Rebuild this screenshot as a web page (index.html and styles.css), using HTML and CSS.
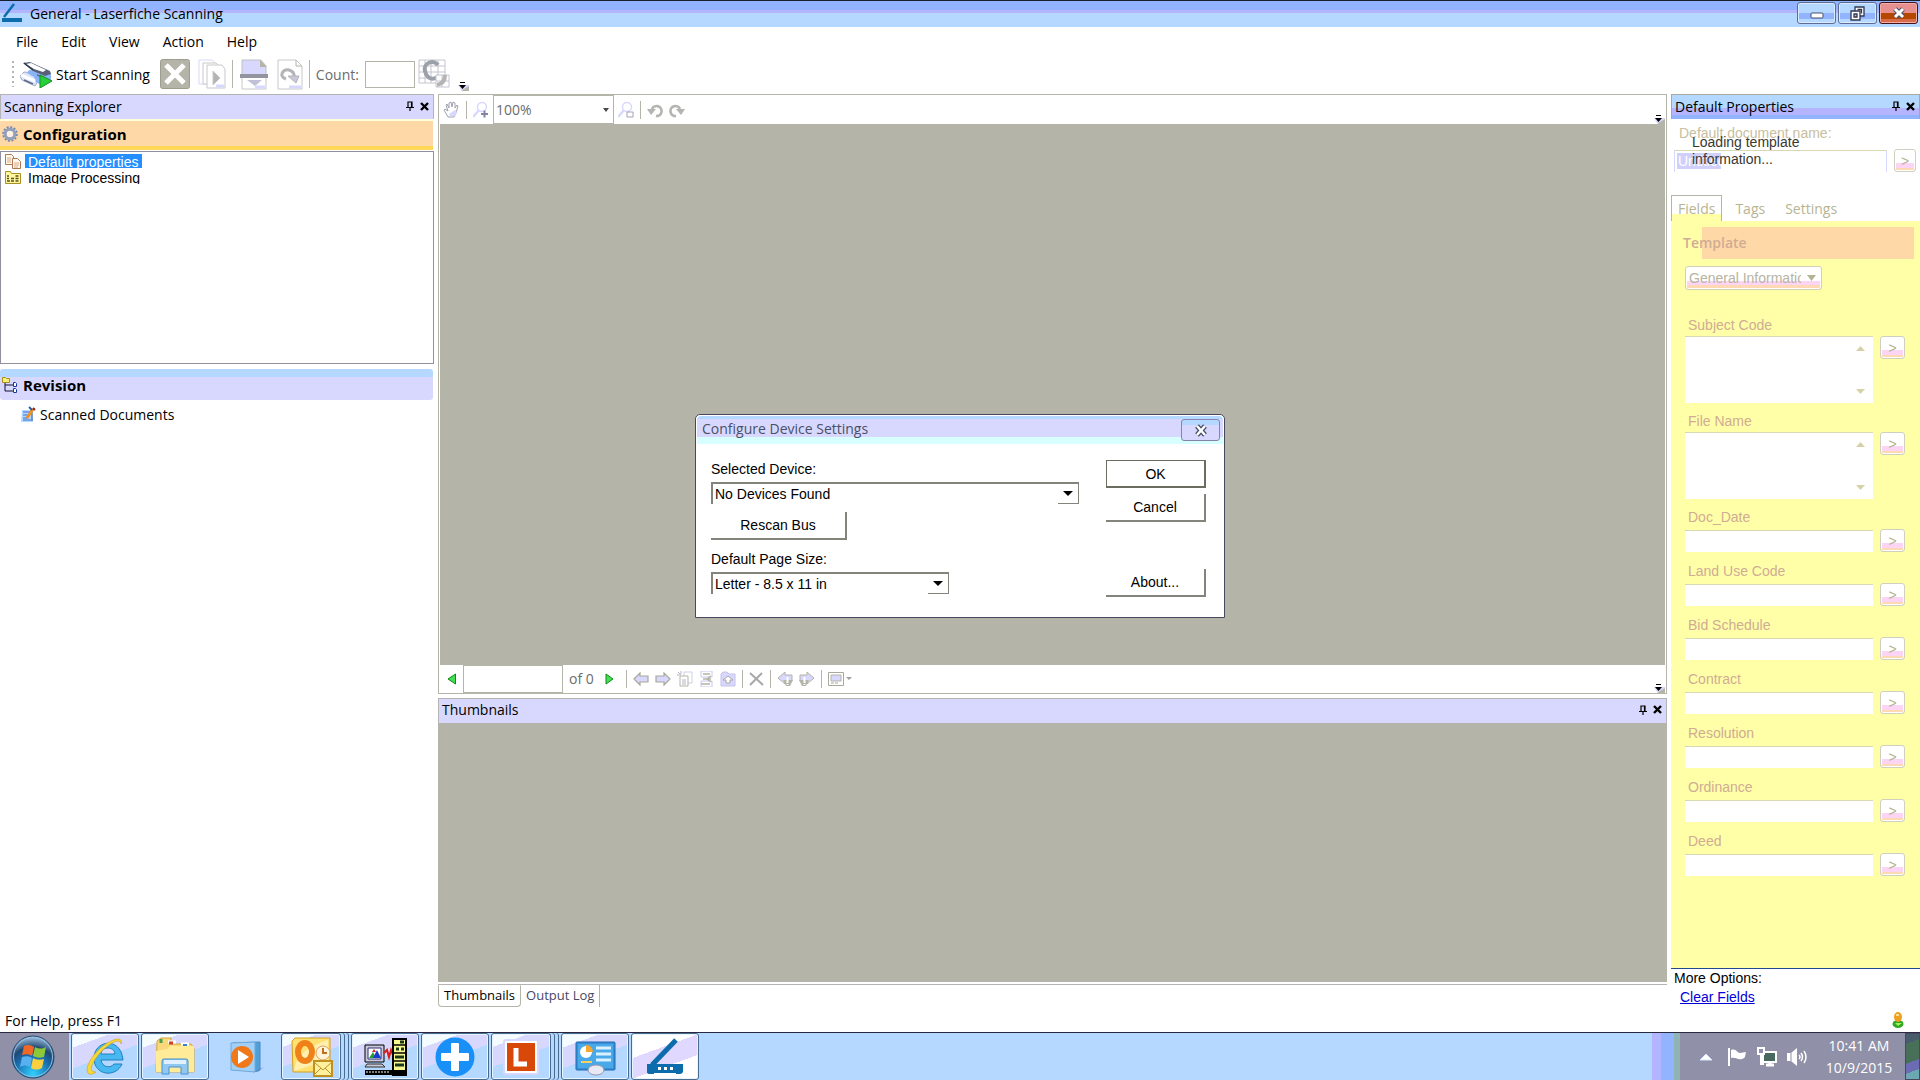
FILE: index.html
```html
<!DOCTYPE html>
<html lang="en">
<head>
  <meta charset="UTF-8">
  <meta name="viewport" content="width=device-width, initial-scale=1.0">
  <title>General - Laserfiche Scanning</title>
  <link rel="stylesheet" href="styles.css">
</head>
<body>

  <!-- Shared icons -->
  <svg class="sprite" aria-hidden="true">
    <symbol id="pin" viewBox="0 0 8 10"><path d="M2 6V1h4v5M0 6.500h8M4 7v3M5.500 1v5" fill="none" stroke="#000" stroke-width="1.200"/></symbol>
    <symbol id="cross" viewBox="0 0 9 9"><path d="M1 1l7 7M8 1L1 8" stroke="#000" stroke-width="2.400"/></symbol>
    <symbol id="more" viewBox="0 0 12 10"><path d="M0 4h11v5H3z" fill="#d8d8ff"/><path d="M3 10l8-5v5z" fill="#b4b4a8"/><path d="M2 1.500h5" stroke="#000"/><path d="M1 4h7L4.500 8z" fill="#000"/></symbol>
    <symbol id="arrow" viewBox="0 0 16 14"><path d="M1 7l6-6v3h8v6H7v3z" fill="#d8d8ff" stroke="#a8a89c" stroke-width="1.200"/></symbol>
    <symbol id="turn" viewBox="0 0 16 16"><path d="M5 7a5 5 0 1 1 4 7" fill="none" stroke="#b4b4b0" stroke-width="2.600"/><path d="M0 7h9l-5 6z" fill="#b4b4b0"/></symbol>
    <symbol id="arrow-badge" viewBox="0 0 16 16"><path d="M1 7l7-6v3h7v6H8v3z" fill="#d8d8ff" stroke="#b4b4a8"/><path d="M6 9h10l-3 6H9z" fill="#b4b4a8"/><path d="M10.500 6v6" stroke="#fff" stroke-width="2"/><path d="M10.500 13v1" stroke="#fff" stroke-width="2"/></symbol>
    <symbol id="glass" viewBox="0 0 16 16"><circle cx="9" cy="5" r="4.500" fill="#fff" stroke="#d8d8ff" stroke-width="1.400"/><path d="M6 8l-6 7" stroke="#d8d8ff" stroke-width="2.400"/></symbol>
  </svg>

  <div class="app">
    <!-- Title bar -->
    <header class="titlebar">
      <svg class="title-icon" viewBox="0 0 20 20"><path d="M12 1L2 14" stroke="#0d6cac" stroke-width="2.500"/><path d="M0 15h20v4H0z" fill="#0d6cac"/></svg>
      <h1 class="title">General - Laserfiche Scanning</h1>
      <div class="win-buttons">
        <button class="win-btn" aria-label="Minimize"><svg width="14" height="14" viewBox="0 0 14 14"><rect x="1" y="7" width="12" height="5" rx="1" fill="#fff" stroke="#46506c"/></svg></button>
        <button class="win-btn" aria-label="Restore"><svg width="15" height="15" viewBox="0 0 15 15" stroke="#303850" stroke-width="1.300"><path d="M5 1h9v9H5z" fill="#fff"/><path d="M7.500 3.500h4v4" fill="none"/><path d="M1 5h9v9H1z" fill="#fff"/><path d="M4 8h3v3H4z" fill="#b4b4ff"/></svg></button>
        <button class="win-btn win-close" aria-label="Close"><svg width="14" height="12" viewBox="0 0 14 12"><path d="M3 2l8 8M11 2l-8 8" stroke="#46506c" stroke-width="5"/><path d="M3 2l8 8M11 2l-8 8" stroke="#fff" stroke-width="3"/></svg></button>
      </div>
    </header>

    <nav class="menubar">
      <a href="#file">File</a>
      <a href="#edit">Edit</a>
      <a href="#view">View</a>
      <a href="#action">Action</a>
      <a href="#help">Help</a>
    </nav>

    <!-- Main toolbar -->
    <div class="toolbar">
      <span class="grip"></span>
      <button class="tool start">
        <svg width="32" height="28" viewBox="0 0 32 28"><path d="M0 16l4-4 11 1 3 8-3 5-13-6z" fill="#dce4f8" stroke="#9098b0" stroke-width=".8"/><path d="M9 10l14 1 8 3v6l-10 5-5-3-2-5-7-4z" fill="#88b4f8"/><path d="M3 3l7-1 20 9 1 3-6 2-12-5z" fill="#586078"/><path d="M6 4l5-1 15 7-3 2-9-3z" fill="#fff"/><path d="M4 3l9 7" stroke="#303848" stroke-width="1.500"/><path d="M1 15l14 6" stroke="#fff" stroke-width="3"/><path d="M4 20l9 4M17 15l6 2" stroke="#606c90" stroke-width="1.500"/><path d="M20 15l12 6-12 7z" fill="#28d038" stroke="#109020"/></svg>
        Start Scanning
      </button>
      <button class="tool" aria-label="Stop"><svg width="30" height="30" viewBox="0 0 30 30"><rect x=".5" y=".5" width="29" height="29" rx="2" fill="#b4b4a8" stroke="#9c9c90"/><path d="M6 6l18 18M24 6L6 24" stroke="#fff" stroke-width="5"/></svg></button>
      <button class="tool" aria-label="Scan pages"><svg width="28" height="30" viewBox="0 0 28 30" fill="#fff" stroke="#c8c8c8"><path d="M1 1h13l4 4v20H1z" stroke="#d8d8ff"/><path d="M5 4h13l4 4v17H5z"/><path d="M9 6h15l3 4v19H9z"/><path d="M15 12l7 7-7 7z" fill="#b4b4b4"/><path d="M18 27h8" stroke="#d8d8ff" stroke-width="3"/></svg></button>
      <span class="sep"></span>
      <button class="tool" aria-label="Split page"><svg width="30" height="31" viewBox="0 0 30 31"><path d="M3 1h19l5 6v9H3z" fill="#d8d8ff" stroke="#c0c0c0"/><path d="M21 1v7h7z" fill="#b4b4a8"/><path d="M3 18h24v12H3z" fill="#fff" stroke="#c8c8c8"/><path d="M1 15h28v4H1z" fill="#9494a0"/><path d="M8 21h15l-7 6z" fill="#c0c0d8"/><path d="M16 28h10" stroke="#d8d8ff" stroke-width="3"/></svg></button>
      <button class="tool" aria-label="Rescan page"><svg width="26" height="31" viewBox="0 0 26 31"><path d="M1 1h18l6 6v23H1z" fill="#fff" stroke="#c8c8c8"/><path d="M19 1v6h6" fill="none" stroke="#b4b4a8"/><path d="M9 20c-8-3-3-10 3-9 4 1 6 4 5 9" fill="none" stroke="#b4b4b8" stroke-width="3"/><path d="M11 17h11l-3 7z" fill="#c8c8dc" stroke="#b4b4b8"/><path d="M12 28h12" stroke="#d8d8ff" stroke-width="3"/></svg></button>
      <span class="sep"></span>
      <label class="count-label" for="count">Count:</label>
      <input class="count" id="count" type="text">
      <button class="tool" aria-label="Image view"><svg width="32" height="30" viewBox="0 0 32 30"><path d="M1 1h26v23H1zM1 7h26M1 13h26M1 19h26M7 1v23M13 1v23M20 1v23" fill="none" stroke="#c4c4d0"/><path d="M20 6c-5-6-15-2-13 6s8 10 14 5" fill="none" stroke="#9ca0a8" stroke-width="4"/><path d="M18 16h13v12H18zM24 16v12M18 22h13" fill="#fff" stroke="#c4c4d0"/><path d="M27 16c0 6-3 9-8 10" fill="none" stroke="#b4b4b4" stroke-width="4"/></svg></button>
      <button class="more" aria-label="Toolbar options"><svg width="12" height="10"><use href="#more"/></svg></button>
    </div>

    <main class="workspace">
      <!-- Scanning explorer -->
      <aside class="explorer">
        <div class="pane-head">
          <h2>Scanning Explorer</h2>
          <button aria-label="Pin"><svg width="8" height="10"><use href="#pin"/></svg></button>
          <button aria-label="Close pane"><svg width="9" height="9"><use href="#cross"/></svg></button>
        </div>
        <h3 class="group config">
          <svg width="16" height="16" viewBox="0 0 16 16"><circle cx="8" cy="8" r="6.800" fill="none" stroke="#7888a8" stroke-width="2" stroke-dasharray="2 1.560"/><circle cx="8" cy="8" r="4.800" fill="#fff0e0" stroke="#90a0bc" stroke-width="3"/></svg>
          Configuration
        </h3>
        <ul class="config-list">
          <li>
            <svg width="16" height="15" viewBox="0 0 16 15" fill="#fff8ec" stroke="#b07850"><path d="M.5.500h6l2 2v8h-8z"/><path d="M2 4h4M2 6h4M2 8h4" stroke="#d8a888"/><path d="M7.500 4.500h5l3 3v7h-8z"/><path d="M9 9h5M9 11h5M9 13h4" stroke="#d8a888"/></svg>
            <a href="#default" class="selected">Default properties</a>
          </li>
          <li>
            <svg width="16" height="14" viewBox="0 0 16 14"><path d="M.5 1.500h5l1 2h9v10H.5z" fill="#fff8a0" stroke="#a89020"/><path d="M2 6h2M2 8.500h2M2 11h3M6 8.500h3M6 11h3M10.500 6h3M10.500 8.500h3M10.500 11h3" stroke="#604c18" stroke-width="1.400"/></svg>
            <a href="#image">Image Processing</a>
          </li>
        </ul>
        <h3 class="group revision">
          <svg width="16" height="16" viewBox="0 0 16 16"><path d="M3 5v9h8M3 8h8" fill="none" stroke="#101030"/><path d="M.5.500h3l1 1h3v4h-7z" fill="#f8f070" stroke="#a89020"/><path d="M11.500 5.500h2l1 1v3h-3zM11.500 11.500h2l1 1v3h-3z" fill="#fff" stroke="#1838a0"/></svg>
          Revision
        </h3>
        <a class="doc-link" href="#scanned">
          <svg width="16" height="17" viewBox="0 0 16 17"><path d="M2 4h10l1 12H1z" fill="#b4d8ff"/><path d="M3 6h7M3 9h6M3 12h5M3 14h8" stroke="#3870d0"/><path d="M12 6v9" stroke="#205098"/><path d="M13 3l-6 9" stroke="#f09020" stroke-width="3"/><path d="M9 1l3 3" stroke="#2060a0" stroke-width="2"/><path d="M13 2l2 2" stroke="#902010" stroke-width="2"/></svg>
          Scanned Documents
        </a>
      </aside>

      <!-- Page view and thumbnails -->
      <section class="center">
        <div class="viewer">
          <div class="viewbar">
            <button class="tool" aria-label="Pan"><svg width="17" height="17" viewBox="0 0 17 17"><path d="M5 16L1 9l1-1 3 2-2-6 1-1 2 4V2l2-1 1 5 1-5 2 1v5l2-3 1 1-2 7-2 4z" fill="#fff" stroke="#a0a0b0"/><path d="M6 13l6-4 2 2-2 4H7z" fill="#d8d8ff"/></svg></button>
            <span class="sep"></span>
            <button class="tool" aria-label="Zoom in"><svg width="16" height="16"><use href="#glass"/><path d="M8 12h7M11.500 8.500v7" stroke="#8484a4" stroke-width="2"/></svg></button>
            <select class="zoom" aria-label="Zoom level"><option>100%</option></select>
            <button class="tool" aria-label="Zoom out"><svg width="16" height="16"><use href="#glass"/><path d="M9 10h6v5H9z" fill="#fff" stroke="#a4a4bc"/></svg></button>
            <span class="sep"></span>
            <button class="tool" aria-label="Rotate left"><svg width="16" height="16"><use href="#turn"/></svg></button>
            <button class="tool flip" aria-label="Rotate right"><svg width="16" height="16"><use href="#turn"/></svg></button>
            <button class="more" aria-label="View options"><svg width="12" height="10"><use href="#more"/></svg></button>
          </div>
          <div class="canvas"></div>
          <div class="viewbar navbar">
            <button class="tool" aria-label="Previous page"><svg width="10" height="12" viewBox="0 0 10 12"><path d="M8.500 1v10L1 6z" fill="#40e050" stroke="#108818"/></svg></button>
            <input class="page-no" type="text" aria-label="Page number">
            <span>of 0</span>
            <button class="tool next" aria-label="Next page"><svg width="10" height="12" viewBox="0 0 10 12"><path d="M1 1v10l7-5z" fill="#40e050" stroke="#108818"/></svg></button>
            <span class="sep"></span>
            <button class="tool" aria-label="Move back"><svg width="16" height="14"><use href="#arrow"/></svg></button>
            <button class="tool flip" aria-label="Move forward"><svg width="16" height="14"><use href="#arrow"/></svg></button>
            <button class="tool" aria-label="New document"><svg width="16" height="16" viewBox="0 0 16 16" fill="#fff" stroke="#d0d0e8"><path d="M7 1h8v11H7z"/><path d="M3 5h8v10H3z" stroke="#b4b4a8"/><path d="M5 9h4M5 11h4M5 13h4M1 1l3 3M4 0v3M0 4h3" stroke="#b4b4c8"/></svg></button>
            <button class="tool" aria-label="Merge pages"><svg width="15" height="16" viewBox="0 0 15 16"><path d="M2 0h11v6H2zM2 10h11v6H2z" fill="#fff" stroke="#c8c8f0"/><path d="M4 3h7M4 8h8M2 13h9M12 5l-4 3 4 3" fill="none" stroke="#b4b4a8" stroke-width="1.500"/></svg></button>
            <button class="tool" aria-label="Store"><svg width="16" height="16" viewBox="0 0 16 16"><path d="M1 3l2-2h4l2 2h6v12H1z" fill="#d8d8ff" stroke="#c4c4e8"/><path d="M3 9l5-4 5 4h-3v3H6V9z" fill="#fff" stroke="#a8a8a4"/></svg></button>
            <span class="sep"></span>
            <button class="tool" aria-label="Delete"><svg width="15" height="14" viewBox="0 0 15 14"><path d="M1 1l13 12M13 1L1 13" stroke="#a8a8a8" stroke-width="2"/></svg></button>
            <span class="sep"></span>
            <button class="tool" aria-label="Previous flag"><svg width="16" height="16"><use href="#arrow-badge"/></svg></button>
            <button class="tool flip" aria-label="Next flag"><svg width="16" height="16"><use href="#arrow-badge"/></svg></button>
            <span class="sep"></span>
            <button class="tool" aria-label="Layout"><svg width="24" height="14" viewBox="0 0 24 14"><path d="M.5.500h15v13H.5z" fill="#fff" stroke="#a8a89c"/><path d="M3 3h10v6H3z" fill="#d8d8ff" stroke="#b4b4a8"/><path d="M3 11h3M7 11h3" stroke="#a8a89c"/><path d="M18 5h6l-3 3z" fill="#a0a0a0"/></svg></button>
            <button class="more" aria-label="Navigation options"><svg width="12" height="10"><use href="#more"/></svg></button>
          </div>
        </div>

        <div class="thumbs">
          <div class="pane-head">
            <h2>Thumbnails</h2>
            <button aria-label="Pin"><svg width="8" height="10"><use href="#pin"/></svg></button>
            <button aria-label="Close pane"><svg width="9" height="9"><use href="#cross"/></svg></button>
          </div>
          <div class="canvas"></div>
        </div>
        <div class="bottom-tabs">
          <button class="active">Thumbnails</button>
          <button>Output Log</button>
        </div>
      </section>

      <!-- Default properties -->
      <aside class="props">
        <div class="pane-head active">
          <h2>Default Properties</h2>
          <button aria-label="Pin"><svg width="8" height="10"><use href="#pin"/></svg></button>
          <button aria-label="Close pane"><svg width="9" height="9"><use href="#cross"/></svg></button>
        </div>
        <div class="doc-name">
          <label for="docname">Default document name:</label>
          <div class="field-row">
            <input id="docname" type="text" value="Untitled">
            <button class="token">&gt;</button>
          </div>
          <p class="loading">Loading template information...</p>
        </div>
        <div class="prop-tabs">
          <button class="active">Fields</button>
          <button>Tags</button>
          <button>Settings</button>
        </div>
        <form class="fields">
          <label class="template" for="template">Template</label>
          <select class="template-select" id="template"><option>General Information</option></select>
          <div class="field-list">
            <label for="f1">Subject Code</label>
            <div class="field-row tall"><textarea id="f1"></textarea><button type="button" class="token">&gt;</button></div>
            <label for="f2">File Name</label>
            <div class="field-row tall"><textarea id="f2"></textarea><button type="button" class="token">&gt;</button></div>
            <label for="f3">Doc_Date</label>
            <div class="field-row"><input id="f3" type="text"><button type="button" class="token">&gt;</button></div>
            <label for="f4">Land Use Code</label>
            <div class="field-row"><input id="f4" type="text"><button type="button" class="token">&gt;</button></div>
            <label for="f5">Bid Schedule</label>
            <div class="field-row"><input id="f5" type="text"><button type="button" class="token">&gt;</button></div>
            <label for="f6">Contract</label>
            <div class="field-row"><input id="f6" type="text"><button type="button" class="token">&gt;</button></div>
            <label for="f7">Resolution</label>
            <div class="field-row"><input id="f7" type="text"><button type="button" class="token">&gt;</button></div>
            <label for="f8">Ordinance</label>
            <div class="field-row"><input id="f8" type="text"><button type="button" class="token">&gt;</button></div>
            <label for="f9">Deed</label>
            <div class="field-row"><input id="f9" type="text"><button type="button" class="token">&gt;</button></div>
          </div>
        </form>
        <div class="options">
          <p>More Options:</p>
          <a href="#clear">Clear Fields</a>
        </div>
      </aside>
    </main>

    <footer class="statusbar">
      <span>For Help, press F1</span>
      <svg width="12" height="16" viewBox="0 0 12 16"><ellipse cx="6" cy="12" rx="5.500" ry="4" fill="#30a820"/><path d="M3 11l3 3 4-3" fill="#a0f060"/><ellipse cx="6" cy="5" rx="4" ry="5" fill="#f0a020"/><path d="M4 3h3" stroke="#ffe090" stroke-width="2"/></svg>
    </footer>

    <!-- Device dialog -->
    <div class="dialog" role="dialog" aria-labelledby="dlg-title">
      <div class="dialog-head">
        <h2 id="dlg-title">Configure Device Settings</h2>
        <button class="dialog-close" aria-label="Close"><svg width="14" height="13" viewBox="0 0 14 13"><path d="M3 2l8 9M11 2l-8 9" stroke="#485068" stroke-width="5"/><path d="M3 2l8 9M11 2l-8 9" stroke="#fff" stroke-width="2.500"/></svg></button>
      </div>
      <div class="dialog-body">
        <div class="dialog-form">
          <label for="device">Selected Device:</label>
          <select id="device"><option>No Devices Found</option></select>
          <button class="dlg-btn rescan">Rescan Bus</button>
          <label for="size">Default Page Size:</label>
          <select id="size" class="size"><option>Letter - 8.5 x 11 in</option></select>
        </div>
        <div class="dialog-actions">
          <button class="dlg-btn ok">OK</button>
          <button class="dlg-btn">Cancel</button>
          <button class="dlg-btn about">About...</button>
        </div>
      </div>
    </div>
  </div>

  <!-- Taskbar -->
  <nav class="taskbar">
    <button class="start-orb" aria-label="Start">
      <svg width="44" height="44" viewBox="0 0 44 44"><defs><radialGradient id="orb" cx=".5" cy=".9" r=".9"><stop offset="0" stop-color="#30d0ff"/><stop offset=".5" stop-color="#1868a8"/><stop offset=".7" stop-color="#204870"/><stop offset="1" stop-color="#a8c8e8"/></radialGradient></defs><circle cx="22" cy="22" r="21" fill="url(#orb)" stroke="#284870"/><circle cx="22" cy="22" r="19.500" fill="none" stroke="#90c0e0"/><path d="M13 11c4-2 7-1 10 1l-2 9c-3-2-6-2-10-1z" fill="#f06828"/><path d="M24 12c4 2 7 2 11 0l-2 10c-4 1-7 1-11-1z" fill="#8cc838"/><path d="M11 22c4-1 7-1 10 1l-2 9c-3-2-6-2-10 0z" fill="#58b0f0"/><path d="M22 23c3 2 7 2 11 1l-2 9c-4 2-7 2-11 0z" fill="#f8d040"/></svg>
    </button>
    <button class="task" aria-label="Internet Explorer">
      <svg width="44" height="40" viewBox="0 0 44 40"><path d="M40 23H18c1 7 9 9 13 4h8c-6 14-28 12-28-6S38-1 40 23zM18 17h14c-1-8-13-8-14 0z" fill="#48b8f0" stroke="#2080c0"/><path d="M38 7c2-4-2-7-10-3C15 10 5 24 4 32c0 7 5 6 9 3-5 0-6-3-3-9C15 16 26 6 34 4c3 0 4 1 4 3z" fill="#f8d838" stroke="#c8a020" stroke-width=".6"/></svg>
    </button>
    <button class="task" aria-label="Windows Explorer">
      <svg width="44" height="40" viewBox="0 0 44 40"><path d="M4 4l4-3h10v6h20l3 4v24H3z" fill="#f8d878" stroke="#d0a840"/><path d="M8 2v4" stroke="#48a050" stroke-width="3"/><path d="M15 5h8M28 7h8" stroke="#fff" stroke-width="3"/><path d="M16 6h4" stroke="#d04030" stroke-width="3"/><path d="M30 8h4" stroke="#3880d0" stroke-width="2"/><path d="M3 14l11-2 3-3h24v26H3z" fill="#ffeb98"/><path d="M9 24q0-2 2-2h22q2 0 2 2v13h-7v-7H16v7H9z" fill="#90c8f0" stroke="#4890d0"/><path d="M11 25h22" stroke="#dff0ff" stroke-width="4"/></svg>
    </button>
    <button class="task idle" aria-label="Media Player">
      <svg width="44" height="40" viewBox="0 0 44 40"><path d="M28 35l13-5-6 5z" fill="#a8a8e0"/><path d="M10 6l27-1v28l-6 2z" fill="#50a0d8" stroke="#4888c0"/><path d="M8 6l24-1v30L8 33z" fill="#a0d0f8" stroke="#70a8d8"/><circle cx="19" cy="20" r="11" fill="#f07818"/><path d="M15 13l11 7-11 7z" fill="#fff"/></svg>
    </button>
    <button class="task stacked" aria-label="Outlook">
      <svg width="44" height="40" viewBox="0 0 44 40"><path d="M3 4l3-3h35v34H4z" fill="#ffe070" stroke="#d0a020"/><path d="M5 34c2-15 12-24 34-31v20z" fill="#fff0b0"/><ellipse cx="16" cy="15" rx="7" ry="9" fill="none" stroke="#f08018" stroke-width="6"/><circle cx="34" cy="16" r="7" fill="#fff4d8" stroke="#e0a060"/><path d="M34 11v5h4" fill="none" stroke="#c07020" stroke-width="2"/><path d="M25 24h18v15H25z" fill="#fff0a0" stroke="#c09020" stroke-width="2"/><path d="M25 25l9 8 9-8M25 38l7-7M43 38l-7-7" fill="none" stroke="#c09020"/></svg>
    </button>
    <button class="task" aria-label="Terminal session">
      <svg width="44" height="40" viewBox="0 0 44 40"><path d="M2 8h19v17H2z" fill="#c8c8d8" stroke="#000"/><path d="M5 11h13v11H5z" fill="#fff" stroke="#303078"/><path d="M6 21l4-6 3 6z" fill="#20a030"/><path d="M10 21l4-8 4 8z" fill="#1838d0"/><path d="M9 15l2-3 2 3z" fill="#e02020"/><path d="M4 27h15l3 3H2z" fill="#c8c8d8" stroke="#303030"/><path d="M21 16l3-3 2 7 2-7 2 5" fill="none" stroke="#e01818" stroke-width="2"/><path d="M30 2h13v36H30z" fill="#f8f890" stroke="#000" stroke-width="2"/><path d="M30 8h13M30 16h13M30 24h13" stroke="#000" stroke-width="1.500"/><path d="M37 5h4M33 12h3M38 12h3M32 20h9M32 28h9" stroke="#183818" stroke-width="3"/><path d="M2 33h41v5H2z" fill="#000"/><path d="M3 35h23" stroke="#fff" stroke-dasharray="2 1"/></svg>
    </button>
    <button class="task" aria-label="Medical app">
      <svg width="44" height="40" viewBox="0 0 44 40"><circle cx="22" cy="20" r="19.500" fill="#1890f8"/><path d="M19 7h6v10h10v6H25v10h-6V23H9v-6h10z" fill="#fff" stroke="#fff" stroke-width="2" stroke-linejoin="round"/></svg>
    </button>
    <button class="task stacked" aria-label="Laserfiche">
      <svg width="36" height="36" viewBox="0 0 36 36"><rect x="1" y="1" width="34" height="34" rx="2" fill="#fff" stroke="#d8d8ff" stroke-width="2"/><path d="M4 4h28v28H4z" fill="#d84808"/><path d="M13 9v16h11" fill="none" stroke="#fff" stroke-width="5"/></svg>
    </button>
    <button class="task" aria-label="Control Panel">
      <svg width="44" height="40" viewBox="0 0 44 40"><rect x="3" y="5" width="39" height="28" rx="1" fill="#3890d8" stroke="#2068b0"/><path d="M5 7h35v24H5z" fill="#48a8e8"/><circle cx="13" cy="15" r="6" fill="#fff"/><path d="M13 8v7h7a7 7 0 0 0-7-7z" fill="#f8a830"/><path d="M23 11h15M23 17h15M23 23h15" stroke="#d8f0ff" stroke-width="3"/><path d="M8 25h11" stroke="#f8d060" stroke-width="2"/><ellipse cx="23" cy="33" rx="8" ry="5" fill="#e8e8f4" stroke="#9898b0"/></svg>
    </button>
    <button class="task current" aria-label="Laserfiche Scanning">
      <svg width="44" height="40" viewBox="0 0 44 40"><path d="M33 3L9 28" stroke="#0d6cac" stroke-width="5"/><path d="M4 27h36v8q-1 2-3 2h-4v-1H11v1H7q-3 0-3-2z" fill="#0d6cac"/><path d="M15 30h3v3h-3zM21 30h3v3h-3zM27 30h3v3h-3z" fill="#fff"/></svg>
    </button>

    <div class="tray">
      <button aria-label="Show hidden icons"><svg width="12" height="8" viewBox="0 0 12 8"><path d="M0 7l6-6 6 6z" fill="#fff" stroke="#d8e8ff"/></svg></button>
      <button aria-label="Action center"><svg width="20" height="20" viewBox="0 0 20 20"><path d="M2 1v18" stroke="#fff" stroke-width="2"/><path d="M4 3c5-2 6 3 9 3l6-1c-1 3 0 6-4 7-5 1-5-2-11-1z" fill="#fff"/></svg></button>
      <button aria-label="Network"><svg width="20" height="20" viewBox="0 0 20 20"><path d="M6 5h13v10H6z" fill="#486860" stroke="#fff" stroke-width="2"/><path d="M9 18h8M13 15v3" stroke="#fff" stroke-width="3"/><path d="M1 1h6v6H1z" fill="#9090a8" stroke="#fff" stroke-width="2"/><path d="M4 7v10h3" fill="none" stroke="#fff" stroke-width="2"/></svg></button>
      <button aria-label="Volume"><svg width="20" height="20" viewBox="0 0 20 20"><path d="M0 6h4l6-5v18l-6-5H0z" fill="#fff"/><path d="M4 6v8" stroke="#9090a8"/><path d="M12 8q2 2 0 4M14 6q3 4 0 8M17 4q4 6 0 12" fill="none" stroke="#fff" stroke-width="1.500"/></svg></button>
      <div class="clock"><span>10:41 AM</span><span>10/9/2015</span></div>
      <button class="show-desktop" aria-label="Show desktop"></button>
    </div>
  </nav>

</body>
</html>
```
FILE: styles.css
```css
* {
  box-sizing: border-box;
}

body {
  margin: 0;
  height: 100vh;
  display: flex;
  flex-direction: column;
  overflow: hidden;
  font-family: "Open Sans", "Noto Sans", sans-serif;
  font-size: 14px;
  background-color: #fff;
  color: #000;
}

h1, h2, h3, p, ul {
  margin: 0;
  padding: 0;
  font-size: 14px;
  font-weight: 400;
}

ul {
  list-style: none;
}

a {
  color: inherit;
  text-decoration: none;
}

button, input, select, textarea {
  font: inherit;
  color: inherit;
  margin: 0;
  padding: 0;
  border: none;
  border-radius: 0;
  background: none;
  outline: none;
}

select {
  appearance: none;
}

textarea {
  resize: none;
}

svg {
  display: block;
  flex: none;
}

.sprite {
  display: none;
}

.app {
  position: relative;
  flex: 1;
  min-height: 0;
  display: flex;
  flex-direction: column;
}

/* Title bar */
.titlebar {
  display: flex;
  align-items: center;
  height: 27px;
  padding: 0 2px 2px;
  border-top: 1px solid #182030;
  background: linear-gradient(#92b4ff 9px, #b4b4ff 9px, #b4b4ff 12px, #b4d8ff 12px);
}

.title-icon {
  width: 20px;
  height: 20px;
  margin-right: 8px;
}

.title {
  flex: 1;
}

.win-buttons {
  display: flex;
  gap: 2px;
}

.win-btn {
  width: 39px;
  height: 22px;
  display: flex;
  align-items: center;
  justify-content: center;
  border: 1px solid #5c6c94;
  border-radius: 3px;
  box-shadow: inset 0 0 0 1px #dceaff;
  background: linear-gradient(#b4d8ff 10px, #92b4ff 10px, #92b4ff 16px, #b4d8ff 16px);
}

.win-close {
  border-color: #481018;
  box-shadow: inset 0 0 0 1px #f0b0a8;
  background: linear-gradient(#e89090 10px, #b44800 10px, #b44800 16px, #d86c48 16px);
}

.menubar {
  display: flex;
  align-items: center;
  gap: 23px;
  height: 30px;
  padding: 0 16px 2px;
}

/* Toolbars */
.toolbar {
  display: flex;
  align-items: center;
  height: 37px;
  padding: 0 12px 3px;
}

.tool {
  display: flex;
  align-items: center;
  justify-content: center;
}

.grip {
  width: 2px;
  height: 26px;
  margin-right: 6px;
  background: repeating-linear-gradient(#b4b4a8 0 2px, #fff 2px 5px);
}

.start {
  gap: 4px;
  margin-right: 10px;
}

.toolbar .tool + .tool {
  margin-left: 8px;
}

.toolbar .start + .tool {
  margin-left: 0;
}

.sep {
  width: 1px;
  height: 28px;
  margin: 0 6px;
  background-color: #b4b4a8;
}

.count-label {
  color: #6c6c6c;
  margin-right: 6px;
}

.count {
  width: 50px;
  height: 27px;
  margin-right: 3px;
  border: 1px solid #b4b4a8;
}

.more {
  align-self: flex-end;
}

.toolbar .more {
  margin-left: 8px;
}

/* Panes */
.workspace {
  flex: 1;
  min-height: 0;
  display: flex;
  gap: 4px;
}

.pane-head {
  display: flex;
  align-items: center;
  gap: 6px;
  height: 25px;
  padding: 0 4px 2px 3px;
  border: 1px solid #b4b4b4;
  border-bottom: none;
  background-color: #d8d8ff;
}

.pane-head h2 {
  flex: 1;
}

.pane-head.active {
  border-color: #a8a89c;
  background: linear-gradient(#b4d8ff 13px, #b4b4ff 13px, #b4b4ff 20px, #92b4ff 20px);
}

.explorer {
  width: 434px;
  flex: none;
}

.group {
  display: flex;
  align-items: center;
  gap: 5px;
  padding: 0 2px;
  font-size: 15px;
  font-weight: 700;
}

.config {
  height: 31px;
  margin-right: 1px;
  border-top: 2px solid #ffffd8;
  border-bottom: 4px solid #ffd858;
  background-color: #ffd8a8;
}

.config-list {
  height: 213px;
  margin-top: 1px;
  padding: 1px 4px;
  border: 1px solid #9090a0;
  font-family: "Liberation Sans", Arial, sans-serif;
}

.config-list li {
  display: flex;
  align-items: center;
  gap: 4px;
  height: 16px;
}

.config-list a {
  height: 14px;
  padding: 0 3px;
  line-height: 16px;
  overflow: hidden;
}

.config-list .selected {
  background-color: #2490ff;
  color: #fff;
}

.revision {
  height: 31px;
  margin: 5px 1px 0 0;
  border-radius: 3px;
  background: linear-gradient(#b4d8ff 8px, #d8d8ff 8px);
}

.doc-link {
  display: flex;
  align-items: center;
  gap: 4px;
  height: 28px;
  padding-left: 20px;
}

.center {
  flex: 1;
  min-width: 0;
  display: flex;
  flex-direction: column;
}

.viewer {
  flex: 600;
  display: flex;
  flex-direction: column;
  border: 1px solid #b4b4a8;
  margin-bottom: 4px;
}

.canvas {
  flex: 1;
  background-color: #b4b4a8;
}

.viewer .canvas {
  margin: 0 1px;
}

.viewbar {
  display: flex;
  align-items: center;
  gap: 6px;
  height: 29px;
  padding-left: 4px;
  color: #6c6c6c;
}

.viewbar .sep {
  height: 18px;
  margin: 0;
}

.viewbar .more {
  margin-left: auto;
}

.zoom {
  width: 121px;
  height: 29px;
  margin: 0 -2px;
  padding-left: 2px;
  border: 1px solid #b4b4a8;
  background: url('data:image/svg+xml,<svg xmlns="http://www.w3.org/2000/svg" width="6" height="4"><path d="M0 0h6L3 4z" fill="%23484848"/></svg>') no-repeat right 4px center;
}

.flip svg {
  transform: scaleX(-1);
}

.navbar {
  height: 28px;
  padding-left: 8px;
}

.page-no {
  width: 100px;
  height: 28px;
  border: 1px solid #b4b4a8;
}

.next {
  margin: 0 5px;
}

.thumbs {
  flex: 285;
  display: flex;
  flex-direction: column;
}

.bottom-tabs {
  display: flex;
  height: 23px;
  margin-top: 2px;
  margin-bottom: 3px;
  font-size: 13px;
  border-top: 1px solid #b4b4b4;
}

.bottom-tabs button {
  padding: 0 5px 3px;
  border-right: 1px solid #b4b4a8;
  color: #484868;
}

.bottom-tabs .active {
  border: 1px solid #b4b4a8;
  border-top-color: #fff;
  border-radius: 0 0 4px 4px;
  color: #000;
}

/* Properties pane */
.props {
  width: 249px;
  flex: none;
  display: flex;
  flex-direction: column;
  font-family: "Liberation Sans", Arial, sans-serif;
}

.props h2,
.prop-tabs {
  font-family: "Open Sans", "Noto Sans", sans-serif;
}

.doc-name {
  position: relative;
  height: 76px;
  padding: 5px 4px 0 3px;
  color: #c8c0a0;
}

.doc-name label {
  display: block;
  height: 24px;
  padding-left: 5px;
  line-height: 18px;
}

.field-row {
  display: flex;
  align-items: center;
  gap: 7px;
  height: 25px;
}

.field-row input,
.field-row textarea {
  flex: 1;
  min-width: 0;
  height: 22px;
  border-top: 1px solid #d8d8b4;
  background-color: #fff;
}

.doc-name input {
  padding-left: 3px;
  border: 1px solid #d8d8ff;
  border-top-color: #d8d8b4;
  border-bottom: none;
  color: #fff;
  background: linear-gradient(#d0d0fa, #d0d0fa) no-repeat 2px 2px / 44px 16px;
}

.token {
  width: 25px;
  height: 23px;
  border: 1px solid #d0d0c0;
  border-radius: 3px;
  box-shadow: inset 0 0 0 1px #fff;
  line-height: 18px;
  color: #b4b490;
  background: linear-gradient(#fff 13px, #fcd4f4 13px, #fcd4f4 18px, #ffd8b4 18px);
}

.doc-name .token {
  width: 22px;
}

.loading {
  position: absolute;
  left: 21px;
  top: 15px;
  width: 150px;
  line-height: 17px;
  color: #383830;
}

.prop-tabs {
  display: flex;
  height: 26px;
  color: #b8b490;
}

.prop-tabs button {
  padding: 0 7px;
  margin-right: 6px;
}

.prop-tabs .active {
  padding: 0 6px;
  border: 1px solid #b4b4a8;
  border-bottom: none;
  background: linear-gradient(#fff 18px, #ffffa8 18px);
}

.fields {
  flex: 1;
  padding: 6px 6px 0 14px;
  background-color: #ffffa8;
  color: #d0ac94;
}

.template {
  display: block;
  height: 32px;
  line-height: 32px;
  font-family: "Open Sans", "Noto Sans", sans-serif;
  font-weight: 600;
  background: linear-gradient(#ffd8a8, #ffd8a8) no-repeat 19px 0;
  margin-left: -2px;
}

.template-select {
  display: block;
  width: 137px;
  height: 24px;
  margin: 7px 0 24px;
  padding: 0 20px 0 3px;
  border: 1px solid #d0d0b4;
  border-radius: 3px;
  box-shadow: inset 0 0 0 1px #fff;
  text-overflow: clip;
  color: #b8b4a0;
  background: url('data:image/svg+xml,<svg xmlns="http://www.w3.org/2000/svg" width="9" height="6"><path d="M0 0h9L4.500 6z" fill="%23b4b490"/></svg>') no-repeat right 5px center, linear-gradient(#fff 14px, #fcd4f4 14px, #fcd4f4 18px, #ffd8b4 18px);
}

.field-list {
  padding-right: 9px;
}

.field-list label {
  display: block;
  height: 22px;
  padding-left: 3px;
  line-height: 22px;
}

.field-list .field-row {
  margin-bottom: 7px;
}

.field-row.tall {
  height: 67px;
  align-items: flex-start;
}

.field-row textarea {
  height: 67px;
  background: url('data:image/svg+xml,<svg xmlns="http://www.w3.org/2000/svg" width="9" height="5"><path d="M0 5h9L4.500 0z" fill="%23d8d0a8"/></svg>') no-repeat right 8px top 9px, url('data:image/svg+xml,<svg xmlns="http://www.w3.org/2000/svg" width="9" height="5"><path d="M0 0h9L4.500 5z" fill="%23d8d0a8"/></svg>') no-repeat right 8px bottom 9px, #fff;
}

.options {
  height: 42px;
  padding: 0 3px;
  border-top: 1px solid #244890;
  line-height: 19px;
}

.options a {
  margin-left: 6px;
  color: #0000d8;
  text-decoration: underline;
}

.statusbar {
  display: flex;
  align-items: center;
  justify-content: space-between;
  height: 22px;
  padding: 0 16px 2px 5px;
}

/* Device dialog */
.dialog {
  position: absolute;
  left: 50%;
  top: 50%;
  transform: translate(-50%, -50%);
  width: 530px;
  border: 1px solid #48485c;
  border-radius: 5px 5px 0 0;
  background-color: #fff;
  font-family: "Liberation Sans", Arial, sans-serif;
}

.dialog-head {
  display: flex;
  align-items: flex-start;
  justify-content: space-between;
  height: 30px;
  padding: 3px 3px 0 5px;
  border: 1px solid #fff;
  border-radius: 5px 5px 0 0;
  background: linear-gradient(#b4d8ff 3px, #d8d8ff 3px, #d8d8ff 21px, #d8ffff 21px);
  font-family: "Open Sans", "Noto Sans", sans-serif;
  color: #485068;
}

.dialog-close {
  width: 39px;
  height: 22px;
  display: flex;
  align-items: center;
  justify-content: center;
  border: 1px solid #8484ac;
  border-radius: 3px;
  background: linear-gradient(#b4d8ff 5px, #d8d8ff 5px);
}

.dialog-body {
  display: flex;
  justify-content: space-between;
  padding: 15px 18px 20px 15px;
}

.dialog-form {
  display: flex;
  flex-direction: column;
  align-items: flex-start;
  padding-bottom: 3px;
}

.dialog-form label {
  height: 22px;
  line-height: 18px;
}

.dialog-form select {
  width: 368px;
  height: 22px;
  padding-left: 2px;
  border: 2px solid #84847c;
  border-bottom: none;
  border-right-width: 1px;
  background: url('data:image/svg+xml,<svg xmlns="http://www.w3.org/2000/svg" width="20" height="20"><path d="M5 7h10l-5 5z"/><path d="M0 19.500h20" stroke="%2384847c"/></svg>') no-repeat right top;
}

.dialog-form .size {
  width: 238px;
}

.dlg-btn {
  width: 100px;
  height: 28px;
  border-right: 2px solid #84847c;
  border-bottom: 2px solid #84847c;
}

.rescan {
  width: 136px;
  margin: 8px 0 10px;
}

.dialog-actions {
  display: flex;
  flex-direction: column;
  gap: 6px;
}

.ok {
  border: 1px solid #6c6c60;
  border-right-width: 2px;
  border-bottom-width: 2px;
}

.about {
  margin-top: auto;
}

/* Taskbar */
.taskbar {
  display: flex;
  gap: 2px;
  height: 48px;
  border-top: 1px solid #282840;
  background-color: #b4d8ff;
}

.start-orb {
  width: 69px;
  padding-left: 11px;
  background-color: #9090a8;
}

.task {
  width: 68px;
  display: flex;
  align-items: center;
  justify-content: center;
  border: 1px solid #486c90;
  border-radius: 3px;
  box-shadow: inset 0 0 0 1px #e8f4ff;
  background: linear-gradient(160deg, #f4fcff 20%, #d8d8ff 20%, #d8d8ff 50%, #b4d8ff 50%);
}

.idle {
  border-color: transparent;
  box-shadow: none;
  background: none;
}

.stacked {
  width: 60px;
  margin-right: 8px;
  box-shadow: inset 0 0 0 1px #e8f4ff, 3px 0 #b4d8ff, 4px 0 #486c90, 7px 0 #b4d8ff, 8px 0 #486c90;
}

.current {
  background: linear-gradient(160deg, #fff 35%, #e0d8ff 35%, #e0d8ff 65%, #fff 65%);
}

.tray {
  display: flex;
  align-items: center;
  gap: 10px;
  margin-left: auto;
  padding-left: 48px;
  color: #fff;
  background: linear-gradient(90deg, #b4b4ff 9px, #92b4ff 9px, #92b4ff 22px, #90b4b4 22px, #90b4b4 28px, #9090a8 28px);
}

.tray button:first-child {
  margin-right: 5px;
}

.clock {
  display: flex;
  flex-direction: column;
  align-items: center;
  width: 84px;
  margin-right: -6px;
  line-height: 22px;
}

.tray .show-desktop {
  width: 15px;
  height: 47px;
  border: 1px solid #484860;
  background: linear-gradient(160deg, #485c6c 20%, #487058 20%, #487058 60%, #6c6cb4 60%, #6c6cb4 80%, #6ca8b4 80%);
}
```
